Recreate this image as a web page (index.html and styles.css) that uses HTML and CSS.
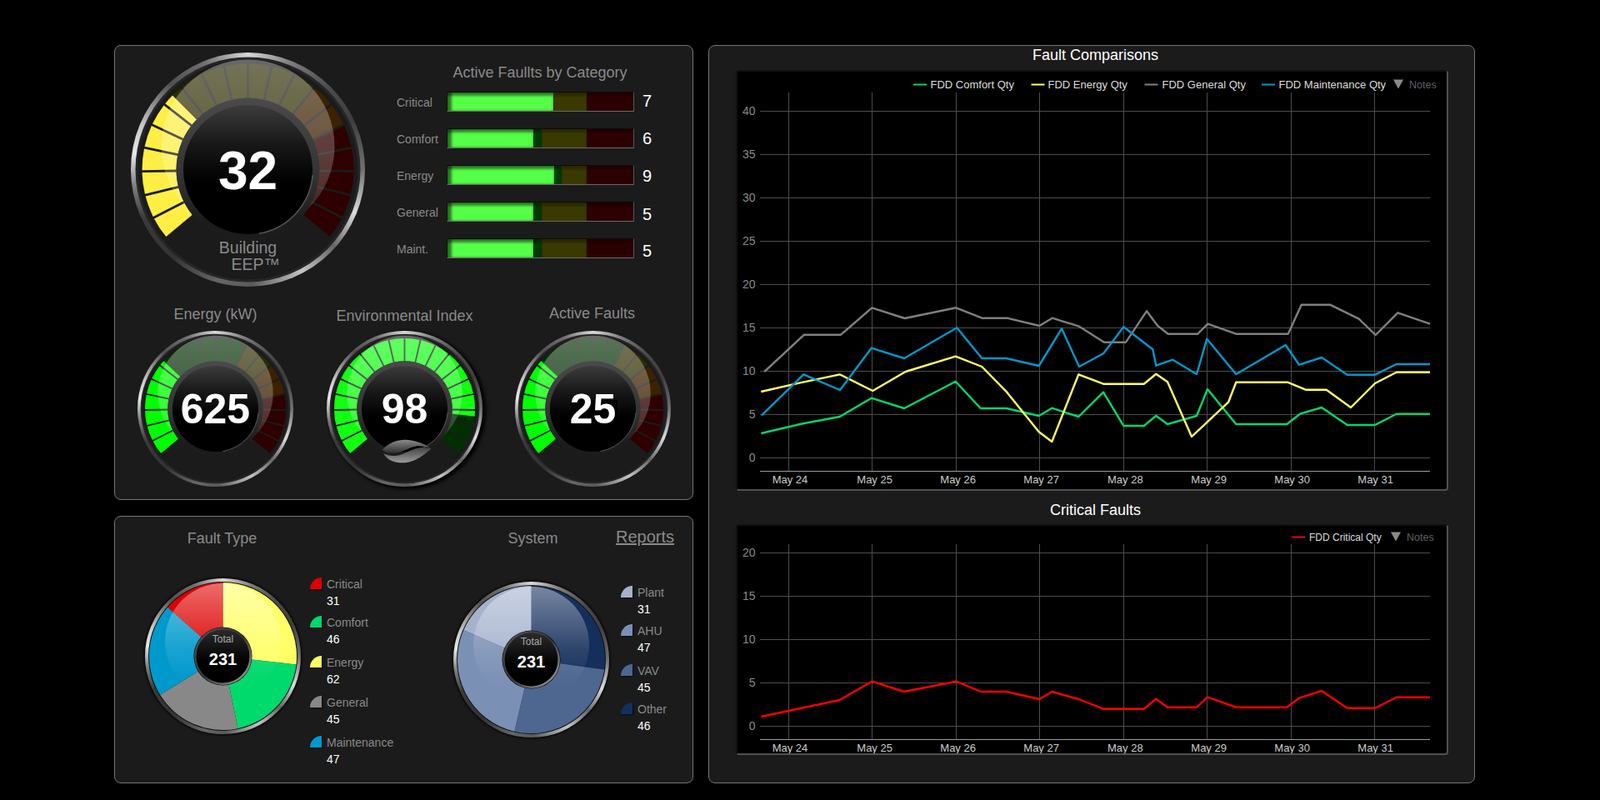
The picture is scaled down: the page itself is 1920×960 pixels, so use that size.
FILE: index.html
```html
<!DOCTYPE html>
<html lang="en">
<head>
    <meta charset="UTF-8">
    <meta name="viewport" content="width=device-width, initial-scale=1.0">
    <title>Fault Dashboard</title>
    <link rel="stylesheet" href="styles.css">
</head>
<body>

    <!-- shared gradients for the gauges and pies -->
    <svg class="svg-defs" width="0" height="0">
        <defs>
            <linearGradient id="gloss" x1="0" y1="0" x2="0" y2="1">
                <stop offset="0" stop-color="#fff" stop-opacity="0.34"/>
                <stop offset="0.7" stop-color="#fff" stop-opacity="0.2"/>
                <stop offset="1" stop-color="#fff" stop-opacity="0.06"/>
            </linearGradient>
            <linearGradient id="pieGloss" x1="0" y1="0" x2="0" y2="1">
                <stop offset="0" stop-color="#fff" stop-opacity="0.42"/>
                <stop offset="0.55" stop-color="#fff" stop-opacity="0.1"/>
                <stop offset="0.85" stop-color="#fff" stop-opacity="0"/>
            </linearGradient>
            <linearGradient id="hubRing" x1="0" y1="0" x2="0" y2="1">
                <stop offset="0" stop-color="#4a4a4a"/>
                <stop offset="0.55" stop-color="#333"/>
                <stop offset="0.85" stop-color="#1c1c1c"/>
            </linearGradient>
            <linearGradient id="hubFace" x1="0" y1="0" x2="0" y2="1">
                <stop offset="0" stop-color="#3c3c3c"/>
                <stop offset="0.3" stop-color="#181818"/>
                <stop offset="0.6" stop-color="#000"/>
            </linearGradient>
            <linearGradient id="pieHubRing" x1="0" y1="0" x2="1" y2="1">
                <stop offset="0" stop-color="#555"/>
                <stop offset="0.5" stop-color="#333"/>
                <stop offset="1" stop-color="#aaa"/>
            </linearGradient>
            <linearGradient id="pieHubFace" x1="0" y1="0" x2="0" y2="1">
                <stop offset="0" stop-color="#2c2c2c"/>
                <stop offset="0.6" stop-color="#000"/>
            </linearGradient>
            <linearGradient id="leafTop" x1="0" y1="0" x2="0" y2="1">
                <stop offset="0" stop-color="#8c8c8c"/>
                <stop offset="1" stop-color="#2e2e2e"/>
            </linearGradient>
            <linearGradient id="leafBottom" x1="0" y1="0" x2="0" y2="1">
                <stop offset="0" stop-color="#444"/>
                <stop offset="1" stop-color="#9a9a9a"/>
            </linearGradient>
        </defs>
    </svg>

    <div class="dashboard">
        <div class="left-col">

            <section class="panel panel-gauges">
                <div class="top-row">
                    <div class="gauge gauge-main" id="gaugeEep"></div>
                    <div class="category">
                        <h2 class="title">Active Faullts by Category</h2>
                        <div class="category-rows" id="categoryRows"></div>
                    </div>
                </div>
                <div class="bottom-row">
                    <div class="gauge-item">
                        <h2 class="title title-energy">Energy (kW)</h2>
                        <div class="gauge gauge-small" id="gaugeEnergy"></div>
                    </div>
                    <div class="gauge-item">
                        <h2 class="title title-env">Environmental Index</h2>
                        <div class="gauge gauge-small gauge-env" id="gaugeEnv"></div>
                    </div>
                    <div class="gauge-item">
                        <h2 class="title title-active">Active Faults</h2>
                        <div class="gauge gauge-small" id="gaugeActive"></div>
                    </div>
                </div>
            </section>

            <section class="panel panel-pies">
                <div class="pie-block pie-block-type">
                    <div class="pie-head">
                        <h2 class="title pie-title">Fault Type</h2>
                    </div>
                    <div class="pie-body">
                        <div class="gauge pie" id="pieType"></div>
                        <ul class="legend">
                            <li class="legend-short"><span class="swatch swatch-critical"></span>Critical<b>31</b></li>
                            <li><span class="swatch swatch-comfort"></span>Comfort<b>46</b></li>
                            <li><span class="swatch swatch-energy"></span>Energy<b>62</b></li>
                            <li><span class="swatch swatch-general"></span>General<b>45</b></li>
                            <li><span class="swatch swatch-maint"></span>Maintenance<b>47</b></li>
                        </ul>
                    </div>
                </div>
                <div class="pie-block pie-block-system">
                    <div class="pie-head">
                        <h2 class="title pie-title">System</h2>
                        <a class="reports" href="#">Reports</a>
                    </div>
                    <div class="pie-body">
                        <div class="gauge pie" id="pieSystem"></div>
                        <ul class="legend">
                            <li class="legend-short"><span class="swatch swatch-plant"></span>Plant<b>31</b></li>
                            <li><span class="swatch swatch-ahu"></span>AHU<b>47</b></li>
                            <li class="legend-short"><span class="swatch swatch-vav"></span>VAV<b>45</b></li>
                            <li><span class="swatch swatch-other"></span>Other<b>46</b></li>
                        </ul>
                    </div>
                </div>
            </section>

        </div>

        <section class="panel panel-charts">
            <h2 class="chart-title">Fault Comparisons</h2>
            <div class="chart chart-faults" id="chartFaults"></div>
            <h2 class="chart-title chart-title-second">Critical Faults</h2>
            <div class="chart chart-critical" id="chartCritical"></div>
        </section>
    </div>

    <script src="app.js"></script>

</body>
</html>
```

FILE: styles.css
```css
body {
    font-family: "Liberation Sans", Arial, sans-serif;
    background-color: #000;
    color: #8a8a8a;
    margin: 0;
    padding: 0;
}
h2 {
    margin: 0;
    font-weight: normal;
}
.svg-defs {
    display: block;
}
.dashboard {
    display: flex;
    gap: 18px;
    padding: 54px 0 0 137px;
}
.left-col {
    display: flex;
    flex-direction: column;
    gap: 19px;
    width: 695px;
}
.panel {
    box-sizing: border-box;
    background-color: #1b1b1b;
    border: 1px solid #757575;
    border-radius: 8px;
}
.title {
    font-size: 18px;
    line-height: 22px;
    text-align: center;
    color: #8a8a8a;
}

/* Gauges */
.panel-gauges {
    height: 546px;
    padding: 8px 0 0 19px;
}
.top-row {
    display: flex;
    gap: 38px;
}
.gauge {
    flex: none;
    border-radius: 50%;
    background: conic-gradient(#d8d8d8 0deg, #7c7c7c 22deg, #4a4a4a 45deg, #3e3e3e 65deg, #707070 90deg, #dcdcdc 112deg, #666 132deg, #c4c4c4 152deg, #5a5a5a 178deg, #666 195deg, #333 220deg, #3a3a3a 245deg, #808080 262deg, #e8e8e8 278deg, #c8c8c8 292deg, #505050 318deg, #707070 338deg, #d8d8d8 360deg);
}
.gauge svg {
    display: block;
    width: 100%;
    height: 100%;
}
.gauge-main {
    width: 281px;
    height: 281px;
}
.gauge-small {
    width: 187px;
    height: 187px;
}
.gauge-env {
    box-shadow: 3px 2px 4px 1px #000;
}
.gauge-value {
    font-weight: bold;
    fill: #fff;
    text-anchor: middle;
}
.gauge-main .gauge-value {
    font-size: 64px;
}
.gauge-small .gauge-value {
    font-size: 75px;
}
.gauge-label {
    font-size: 19.5px;
    fill: #8a8a8a;
}
.bottom-row {
    display: flex;
    align-items: flex-end;
    gap: 39.5px;
    margin: 21px 0 0 8px;
}
.gauge-item {
    width: 187px;
}
.title-energy {
    margin-bottom: 9px;
}
.title-env {
    margin: 0 -19px 7px -18px;
}
.title-active {
    margin: 0 1px 10px -1px;
}

/* Category bars */
.category {
    width: 344px;
}
.category .title {
    margin: 13px 0 12px;
}
.category-rows {
    display: flex;
    flex-direction: column;
    gap: 20px;
}
.category-row {
    display: flex;
    align-items: center;
    height: 24px;
    font-size: 14px;
}
.category-name {
    width: 60px;
    padding-top: 2px;
}
.bar {
    position: relative;
    display: flex;
    box-sizing: border-box;
    width: 225px;
    height: 24px;
    border-top: 1px solid #0c0c0c;
    border-right: 1px solid #555;
    border-bottom: 1px solid #6a6a6a;
    border-left: 1px solid #111;
}
.bar-zone {
    box-shadow: inset 0 4px 3px rgba(0,0,0,0.3);
}
.zone-green {
    background-color: #003b00;
}
.zone-yellow {
    background-color: #3a3a00;
}
.zone-red {
    flex: 1;
    background-color: #2d0000;
}
.bar-fill {
    position: absolute;
    top: 0;
    bottom: 0;
    left: 0;
    background-color: #55ff47;
    box-shadow: inset 5px 0 3px rgba(0,0,0,0.5), inset 0 4px 3px rgba(0,0,0,0.45);
}
.category-value {
    margin-left: 10px;
    font-size: 20px;
    line-height: 20px;
    color: #fff;
}

/* Pies */
.panel-pies {
    display: flex;
    height: 321px;
    padding: 15px 0 0 36px;
}
.pie-block-type {
    width: 370px;
}
.pie-head {
    display: flex;
}
.pie-title {
    width: 187px;
}
.pie-block-type .pie-title {
    margin-left: -1px;
}
.pie-block-system .pie-title {
    margin: 0 -2px 0 2px;
}
.reports {
    margin: -2px 0 0 8px;
    font-size: 20px;
    line-height: 22px;
    color: #8a8a8a;
}
.pie-body {
    display: flex;
}
.pie-block-type .pie-body {
    margin-top: 37px;
    gap: 11px;
}
.pie-block-system .pie-body {
    margin-top: 41px;
    gap: 14px;
}
.pie {
    width: 187px;
    height: 187px;
    box-shadow: 0 0 3px 1px #000;
}
.pie-label {
    font-size: 12px;
    fill: #aaa;
    text-anchor: middle;
}
.pie-total {
    font-size: 20px;
    font-weight: bold;
    fill: #fff;
    text-anchor: middle;
}
.legend {
    list-style: none;
    margin: 0;
    padding: 0;
    font-size: 14px;
    line-height: 17px;
}
.pie-block-type .legend {
    margin-top: -1px;
}
.pie-block-system .legend {
    margin-top: 5px;
}
.legend li {
    position: relative;
    height: 48px;
    padding-left: 20px;
}
.legend li.legend-short {
    height: 46px;
}
.legend b {
    display: block;
    margin-top: 3px;
    font-weight: normal;
    color: #fff;
}
.swatch {
    position: absolute;
    top: 0;
    left: 0;
    width: 14px;
    height: 14px;
    border-radius: 14px 0 0 0;
    box-shadow: 1px 1px 2px rgba(0,0,0,0.6);
}
.swatch-critical { background-color: #dd0000; }
.swatch-comfort { background-color: #00d96c; }
.swatch-energy { background-color: #ffff66; }
.swatch-general { background-color: #888; }
.swatch-maint { background-color: #0099cc; }
.swatch-plant { background-color: #a4b2ce; }
.swatch-ahu { background-color: #7b90b5; }
.swatch-vav { background-color: #4e6790; }
.swatch-other { background-color: #152f5c; }

/* Charts */
.panel-charts {
    width: 920px;
    height: 886px;
    padding-left: 32px;
}
.chart-title {
    width: 855px;
    box-sizing: border-box;
    padding-left: 8px;
    margin-bottom: 7px;
    font-size: 18px;
    line-height: 22px;
    text-align: center;
    color: #fff;
}
.chart-title-second {
    margin: 12px 0 6px;
}
.chart {
    box-sizing: border-box;
    width: 855px;
    background-color: #000;
    border: 2px solid;
    border-color: #111 #505050 #505050 #111;
    border-radius: 4px;
}
.chart svg {
    display: block;
}
.chart-faults {
    height: 505px;
}
.chart-critical {
    height: 277px;
}
.grid-line {
    stroke: #4c4c4c;
    stroke-width: 1;
}
.axis-line {
    stroke: #9a9a9a;
    stroke-width: 1;
}
.axis-y {
    font-size: 14px;
    fill: #8a8a8a;
    text-anchor: end;
}
.axis-x {
    font-size: 13px;
    fill: #ccc;
}
.series {
    fill: none;
    stroke-width: 2.4;
    stroke-linejoin: round;
}
.chart-legend {
    fill: #ddd;
}
.chart-faults .chart-legend {
    font-size: 13px;
}
.chart-critical .chart-legend {
    font-size: 12px;
}
.chart-notes {
    font-size: 12.5px;
    fill: #5f5f66;
}
.notes-arrow {
    fill: #8a8a8a;
}
```

FILE: app.js
```js
const DIM_YELLOW = "#2e2c00";
const DIM_ORANGE = "#3d2100";
const DIM_RED = "#2e0000";
const DIM_GREEN = "#003000";

function polar(r, deg) {
    const a = deg * Math.PI / 180;
    return (r * Math.sin(a)).toFixed(2) + " " + (-r * Math.cos(a)).toFixed(2);
}

function sector(r1, r2, from, to) {
    const large = to - from > 180 ? 1 : 0;
    return "M" + polar(r1, from) + " L" + polar(r2, from) +
        " A" + r2 + " " + r2 + " 0 " + large + " 1 " + polar(r2, to) +
        " L" + polar(r1, to) +
        " A" + r1 + " " + r1 + " 0 " + large + " 0 " + polar(r1, from) + " Z";
}

// block with straight sided gaps, so the gap keeps its width from hub to rim
function block(from, to) {
    const inner = 1.4 / 86 * 180 / Math.PI;
    const outer = 1.4 / 127 * 180 / Math.PI;
    return "M" + polar(86, from + inner) + " L" + polar(127, from + outer) +
        " A127 127 0 0 1 " + polar(127, to - outer) +
        " L" + polar(86, to - inner) +
        " A86 86 0 0 0 " + polar(86, from + inner) + " Z";
}

// 20 blocks, 13 degrees each, from lower left round to lower right
function drawSegments(colors, lit, litColor) {
    let out = "";
    for (let i = 0; i < 20; i++) {
        const from = -130 + 13 * i;
        const to = from + 13;
        out += '<path d="' + block(from, to) + '" fill="' + colors(i) + '"/>';
        if (lit >= i + 1) {
            out += '<path d="' + block(from, to) + '" fill="' + litColor + '"/>';
        } else if (lit > i) {
            out += '<path d="' + block(from, from + 13 * (lit - i)) + '" fill="' + litColor + '"/>';
        }
    }
    return out;
}

function drawGauge(id, opts) {
    const leaf = opts.leaf
        ? '<path d="M-40 74C-28 60 -10 55 4 56C20 57 36 63 48 72C34 66 22 66 12 70C0 75 -8 80 -20 80C-30 80 -36 78 -40 74Z" fill="url(#leafTop)"/>' +
          '<path d="M-38 80C-28 86 -14 86 -4 82C8 77 18 71 30 70C38 70 44 71 48 72C38 80 26 92 8 96C-6 99 -30 98 -38 80Z" fill="url(#leafBottom)"/>'
        : "";
    document.getElementById(id).innerHTML =
        '<svg viewBox="-140.5 -140.5 281 281">' +
        '<circle r="133.5" fill="#1b1b1b" stroke="#262626" stroke-width="3"/>' +
        drawSegments(opts.colors, opts.lit, opts.litColor) +
        '<circle cy="-28" r="104" fill="url(#gloss)"/>' +
        '<circle r="86" fill="url(#hubRing)"/>' +
        '<circle r="77.5" fill="url(#hubFace)"/>' +
        '<path d="' + "M" + polar(78, 95) + " A78 78 0 0 1 " + polar(78, 170) + '" fill="none" stroke="#555" stroke-width="1.5"/>' +
        leaf +
        (opts.backing ? '<rect x="-40" y="-16" width="84" height="44" fill="#000"/>' : "") +
        '<text class="gauge-value" x="0" y="' + opts.baseline + '">' + opts.value + "</text>" +
        (opts.extra || "") +
        "</svg>";
}

function smallColors(i) {
    if (i < 12) return DIM_GREEN;
    if (i < 14) return DIM_YELLOW;
    if (i < 16) return DIM_ORANGE;
    return DIM_RED;
}

drawGauge("gaugeEep", {
    value: 32,
    baseline: 23,
    lit: 6.55,
    litColor: "#ffee44",
    colors: function(i) {
        if (i < 13) return DIM_YELLOW;
        if (i < 15) return DIM_ORANGE;
        return DIM_RED;
    },
    extra: '<text class="gauge-label" text-anchor="middle" x="0" y="100">Building</text>' +
           '<text class="gauge-label" x="-20" y="120">EEP™</text>'
});
drawGauge("gaugeEnergy", { value: 625, baseline: 27, lit: 6.4, litColor: "#00ff00", colors: smallColors });
drawGauge("gaugeEnv", { value: 98, baseline: 27, lit: 17.45, litColor: "#11ff11", leaf: true, colors: function() { return DIM_GREEN; } });
drawGauge("gaugeActive", { value: 25, baseline: 27, lit: 6.4, litColor: "#00ff00", backing: true, colors: smallColors });

// Active faults by category, drop nudges the number a little lower on each row
const categories = [
    { name: "Critical", value: 7, fill: 127, green: 127, drop: -2 },
    { name: "Comfort", value: 6, fill: 103, green: 113, drop: 0 },
    { name: "Energy", value: 9, fill: 128, green: 137, drop: 1.4 },
    { name: "General", value: 5, fill: 103, green: 113, drop: 5.4 },
    { name: "Maint.", value: 5, fill: 103, green: 113, drop: 5.4 }
];

document.getElementById("categoryRows").innerHTML = categories.map(function(c) {
    return '<div class="category-row">' +
        '<span class="category-name">' + c.name + "</span>" +
        '<div class="bar">' +
        '<span class="bar-zone zone-green" style="width:' + c.green + 'px"></span>' +
        '<span class="bar-zone zone-yellow" style="width:' + (167 - c.green) + 'px"></span>' +
        '<span class="bar-zone zone-red"></span>' +
        '<span class="bar-fill" style="width:' + c.fill + 'px"></span>' +
        "</div>" +
        '<span class="category-value" style="margin-top:' + c.drop + 'px">' + c.value + "</span>" +
        "</div>";
}).join("");

// Pies
function drawPie(id, slices, totalY) {
    let start = 0;
    let paths = "";
    slices.forEach(function(s) {
        paths += '<path d="' + sector(0.01, 88.5, start, s.to) + '" fill="' + s.color + '"/>';
        start = s.to;
    });
    document.getElementById(id).innerHTML =
        '<svg viewBox="-93.5 -93.5 187 187">' +
        '<circle r="89.5" fill="#111"/>' +
        paths +
        '<circle cy="-18" r="69.5" fill="url(#pieGloss)"/>' +
        '<circle r="35" fill="#000"/>' +
        '<circle r="33.2" fill="url(#pieHubFace)" stroke="url(#pieHubRing)" stroke-width="2.5"/>' +
        '<text class="pie-label" x="0" y="' + totalY[0] + '">Total</text>' +
        '<text class="pie-total" x="0" y="' + totalY[1] + '">231</text>' +
        "</svg>";
}

drawPie("pieType", [
    { to: 96.5, color: "#ffff66" },
    { to: 168.2, color: "#00d96c" },
    { to: 238.4, color: "#888888" },
    { to: 311.6, color: "#0099cc" },
    { to: 360, color: "#dd0000" }
], [-17, 10]);

drawPie("pieSystem", [
    { to: 97.8, color: "#152f5c" },
    { to: 193.2, color: "#4e6790" },
    { to: 293.5, color: "#7b90b5" },
    { to: 360, color: "#a4b2ce" }
], [-18, 9]);

// Charts. Everything below is in page pixels, the svg viewBox does the offset.
const gridX = [946.5, 1046.5, 1147.5, 1247.5, 1348.5, 1448.5, 1549.5, 1649.5];
const dayLabels = [
    ["May 24", 926.7], ["May 25", 1028.3], ["May 26", 1128.3], ["May 27", 1228.3],
    ["May 28", 1329], ["May 29", 1429.3], ["May 30", 1529.3], ["May 31", 1629.3]
];

const faultSeries = [
    { color: "#00d96c", points: "913.3,520 960,509 1007.7,500 1045.7,477.7 1085,490 1146.7,457.7 1176.7,490 1207.7,490 1246.7,499 1262.3,489.7 1294.3,500 1324,470.7 1348.3,511 1372.7,511 1387.3,499 1401,509 1436,499 1449,467 1483.3,509 1544.3,509 1560,496.7 1586,489 1616.7,510 1650,510 1675.7,496.7 1716,496.7" },
    { color: "#ffff66", points: "913.3,470 960,459.3 1007.7,449.3 1047.3,469 1086.7,446 1146.7,427.7 1178.3,440 1208.3,470.7 1246.7,518.3 1262.3,530 1294.3,449.3 1324,460.7 1372.7,460.7 1387.3,448.7 1401,458.3 1430,524 1474,482.7 1483.3,458.7 1545,458.7 1566.7,467.7 1591.7,467.7 1621,489 1650,460 1675.7,446.7 1716,446.7" },
    { color: "#808080", points: "917.3,446 965,401.7 1009,401.7 1046.3,369.3 1085.7,382 1147.3,369.3 1178.3,381.7 1208.3,381.7 1247.3,391 1262.7,381.7 1295,391.7 1325,410.7 1351,410.7 1376,373.3 1389,390.7 1401.7,400.7 1437.3,400.7 1449.3,388.7 1483.3,400.7 1545.7,400.7 1561.7,365.7 1596,365.7 1630.7,382.7 1650.7,402 1677.3,375.3 1716,388.7" },
    { color: "#0099cc", points: "914,498.3 964.3,449.3 1008,468 1045.7,417.7 1085,430 1148.3,393.3 1178.3,430 1207.7,430 1246.7,439 1274,394.3 1295,440 1324.3,424 1348.3,392.3 1383.3,419.3 1387.3,438.7 1407.3,431.7 1436,449 1448.3,406.7 1483.3,449 1542.7,414 1559,437.7 1586,429 1616.7,449.7 1650,449.7 1675.7,437 1716,437" }
];

const criticalSeries = [
    { color: "#ff0000", points: "913.3,860 1007.7,840 1046.3,817.7 1085,830 1147.3,817.7 1177.3,830 1207.7,830 1247.3,839 1262.3,830 1294.3,839 1324,850.7 1372.7,850.7 1387.3,838.7 1401,848.7 1436,848.7 1449,836.7 1483.3,848.7 1544.3,848.7 1559,837.7 1586,829 1616.7,849.7 1650,849.7 1675.7,836.7 1716,836.7" }
];

function drawChart(id, c) {
    let out = "";
    for (let v = 0; v <= c.maxY; v += 5) {
        const y = c.zeroY - 10.4 * v;
        out += '<line class="grid-line" x1="912" x2="1716" y1="' + y + '" y2="' + y + '"/>';
        out += '<text class="axis-y" x="906.5" y="' + (y + 4) + '">' + v + "</text>";
    }
    gridX.forEach(function(x) {
        out += '<line class="grid-line" x1="' + x + '" x2="' + x + '" y1="' + c.topY + '" y2="' + c.axisY + '"/>';
    });
    out += '<line class="axis-line" x1="912" x2="1716" y1="' + c.axisY + '" y2="' + c.axisY + '"/>';
    dayLabels.forEach(function(d) {
        out += '<text class="axis-x" x="' + d[1] + '" y="' + (c.axisY + 14.5) + '">' + d[0] + "</text>";
    });
    c.series.forEach(function(s) {
        out += '<polyline class="series" stroke="' + s.color + '" points="' + s.points + '"/>';
    });
    c.legend.forEach(function(l) {
        out += '<line x1="' + l.x + '" x2="' + (l.x + 16) + '" y1="' + c.legendY + '" y2="' + c.legendY + '" stroke="' + l.color + '" stroke-width="2"/>';
        out += '<text class="chart-legend" x="' + l.textX + '" y="' + (c.legendY + 4.5) + '">' + l.name + "</text>";
    });
    const tx = c.notesX;
    const ty = c.legendY - 6;
    out += '<polygon class="notes-arrow" points="' + tx + "," + ty + " " + (tx + 12) + "," + ty + " " + (tx + 6) + "," + (ty + 11) + '"/>';
    out += '<text class="chart-notes" x="' + (tx + 19) + '" y="' + (c.legendY + 4.5) + '">Notes</text>';

    document.getElementById(id).innerHTML =
        '<svg width="851" height="' + c.box[3] + '" viewBox="' + c.box.join(" ") + '">' + out + "</svg>";
}

drawChart("chartFaults", {
    box: [885, 86, 851, 501],
    zeroY: 549.5,
    maxY: 40,
    topY: 111,
    axisY: 565.5,
    legendY: 101.5,
    notesX: 1672,
    series: faultSeries,
    legend: [
        { name: "FDD Comfort Qty", color: "#00d96c", x: 1096, textX: 1116.5 },
        { name: "FDD Energy Qty", color: "#ffff66", x: 1237.5, textX: 1257.5 },
        { name: "FDD General Qty", color: "#808080", x: 1373.5, textX: 1394.5 },
        { name: "FDD Maintenance Qty", color: "#0099cc", x: 1514, textX: 1534.5 }
    ]
});

drawChart("chartCritical", {
    box: [885, 631, 851, 273],
    zeroY: 871.5,
    maxY: 20,
    topY: 653,
    axisY: 887.5,
    legendY: 644.5,
    notesX: 1669,
    series: criticalSeries,
    legend: [
        { name: "FDD Critical Qty", color: "#ff0000", x: 1550, textX: 1571 }
    ]
});
```
